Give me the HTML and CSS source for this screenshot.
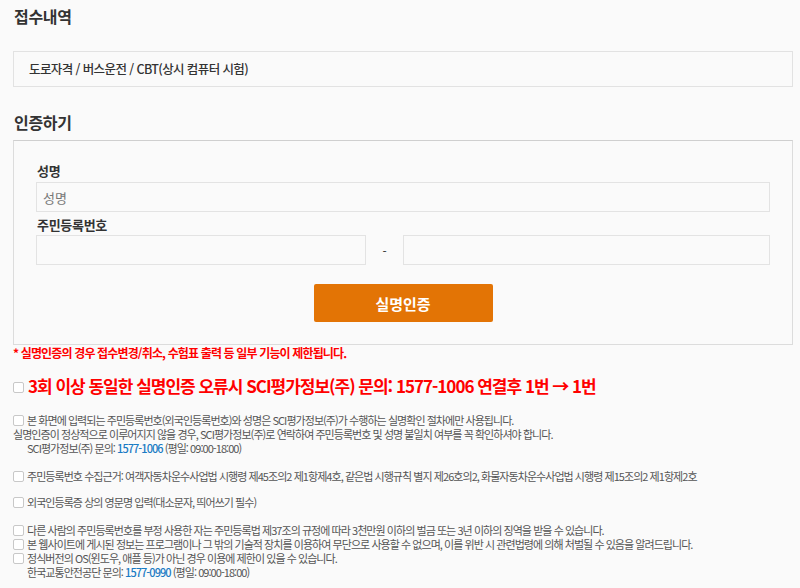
FILE: index.html
```html
<!DOCTYPE html>
<html lang="ko">
<head>
  <meta charset="UTF-8">
  <meta name="viewport" content="width=device-width, initial-scale=1.0">
  <title>인증하기</title>
  <link rel="stylesheet" href="styles.css">
</head>
<body>
  <div class="wrap">
    <h2 class="title">접수내역</h2>
    <div class="summary">도로자격 / 버스운전 / CBT(상시 컴퓨터 시험)</div>

    <h2 class="title title-auth">인증하기</h2>
    <div class="auth-box">
      <label class="label" for="name">성명</label>
      <input class="input" type="text" id="name" placeholder="성명">
      <label class="label label-jumin" for="jumin1">주민등록번호</label>
      <div class="jumin-row">
        <input class="input jumin-front" type="text" id="jumin1">
        <span class="dash">-</span>
        <input class="input jumin-back" type="password" id="jumin2">
      </div>
      <div class="btn-row">
        <button class="btn-auth" type="button">실명인증</button>
      </div>
    </div>

    <p class="warn">* 실명인증의 경우 접수변경/취소, 수험표 출력 등 일부 기능이 제한됩니다.</p>

    <p class="alert"><span class="chk"></span>3회 이상 동일한 실명인증 오류시 SCI평가정보(주) 문의: 1577-1006 연결후 1번 → 1번</p>

    <div class="notes">
      <p><span class="chk"></span>본 화면에 입력되는 주민등록번호(외국인등록번호)와 성명은 SCI평가정보(주)가 수행하는 실명확인 절차에만 사용됩니다.<br>
      실명인증이 정상적으로 이루어지지 않을 경우, SCI평가정보(주)로 연락하여 주민등록번호 및 성명 불일치 여부를 꼭 확인하셔야 합니다.<br>
      <span class="indent">SCI평가정보(주) 문의: <b class="tel">1577-1006</b> (평일: 09:00-18:00)</span></p>

      <p class="gap"><span class="chk"></span>주민등록번호 수집근거: 여객자동차운수사업법 시행령 제45조의2 제1항제4호, 같은법 시행규칙 별지 제26호의2, 화물자동차운수사업법 시행령 제15조의2 제1항제2호</p>

      <p class="gap-sm"><span class="chk"></span>외국인등록증 상의 영문명 입력(대소문자, 띄어쓰기 필수)</p>

      <p class="gap"><span class="chk"></span>다른 사람의 주민등록번호를 부정 사용한 자는 주민등록법 제37조의 규정에 따라 3천만원 이하의 벌금 또는 3년 이하의 징역을 받을 수 있습니다.<br>
      <span class="chk"></span>본 웹사이트에 게시된 정보는 프로그램이나 그 밖의 기술적 장치를 이용하여 무단으로 사용할 수 없으며, 이를 위반 시 관련법령에 의해 처벌될 수 있음을 알려드립니다.<br>
      <span class="chk"></span>정식버전의 OS(윈도우, 애플 등)가 아닌 경우 이용에 제한이 있을 수 있습니다.<br>
      <span class="indent">한국교통안전공단 문의: <b class="tel">1577-0990</b> (평일: 09:00-18:00)</span></p>
    </div>
  </div>
</body>
</html>
```

FILE: styles.css
```css
body {
  margin: 0;
  padding: 0;
  background: #fafafa;
  font-family: "Noto Sans CJK KR", "Noto Sans", sans-serif;
  color: #333;
}
.wrap {
  padding: 0 7px 0 13px;
}
.title {
  margin: 0;
  padding: 5px 0 0 1px;
  font-size: 16px;
  font-weight: bold;
  line-height: 22px;
  letter-spacing: -0.3px;
  color: #333;
}
.summary {
  margin-top: 24px;
  height: 34px;
  line-height: 34px;
  padding-left: 15px;
  border: 1px solid #e2e2e2;
  font-size: 12.5px;
  font-weight: 500;
  letter-spacing: -0.6px;
  color: #333;
}
.title-auth {
  padding-top: 24px;
}
.auth-box {
  margin-top: 7px;
  border: 1px solid #dcdcdc;
  border-top-color: #cfcfcf;
  padding: 20px 22px 22px 22px;
  display: flex;
  flex-direction: column;
}
.label {
  font-size: 13px;
  font-weight: bold;
  line-height: 20px;
  color: #333;
  padding-left: 1px;
  margin-bottom: 1px;
  letter-spacing: -0.3px;
}
.label-jumin {
  margin-top: 3px;
  margin-bottom: 0;
}
.input {
  box-sizing: border-box;
  height: 30px;
  border: 1px solid #e3e3e3;
  background: #fafafa;
  padding: 0 6px;
  font-family: inherit;
  font-size: 13px;
  color: #333;
  outline: none;
}
.input::placeholder {
  color: #777;
}
.jumin-row {
  display: flex;
  align-items: center;
}
.jumin-front {
  width: 45%;
}
.jumin-back {
  width: 50%;
}
.dash {
  width: 5%;
  text-align: center;
  font-size: 12px;
  color: #333;
}
.btn-row {
  display: flex;
  justify-content: center;
  margin-top: 19px;
}
.btn-auth {
  width: 179px;
  height: 38px;
  background: #e37405;
  color: #fff;
  border: none;
  border-radius: 2px;
  font-family: inherit;
  font-size: 15px;
  font-weight: bold;
  cursor: pointer;
}
.warn {
  margin: 0;
  font-size: 12px;
  font-weight: bold;
  line-height: 16px;
  color: #f00;
  letter-spacing: -0.85px;
}
.alert {
  margin: 0;
  padding-top: 12px;
  font-size: 17px;
  font-weight: bold;
  line-height: 26px;
  color: #f00;
  letter-spacing: -1px;
  display: flex;
  align-items: center;
}
.alert .chk {
  margin-right: 4px;
  margin-top: 2px;
}
.chk {
  display: inline-block;
  box-sizing: border-box;
  width: 11px;
  height: 11px;
  border: 1px solid #c8c8c8;
  border-radius: 2px;
  background: #fff;
  margin-right: 3px;
  vertical-align: -1px;
}
.notes {
  padding-top: 14px;
  font-size: 11px;
  line-height: 14px;
  color: #555;
  letter-spacing: -0.95px;
}
.notes p {
  margin: 0;
}
.notes .gap {
  margin-top: 14px;
}
.notes .gap-sm {
  margin-top: 12px;
}
.indent {
  padding-left: 14px;
}
.tel {
  color: #1a7bc4;
  font-weight: 500;
}
```
